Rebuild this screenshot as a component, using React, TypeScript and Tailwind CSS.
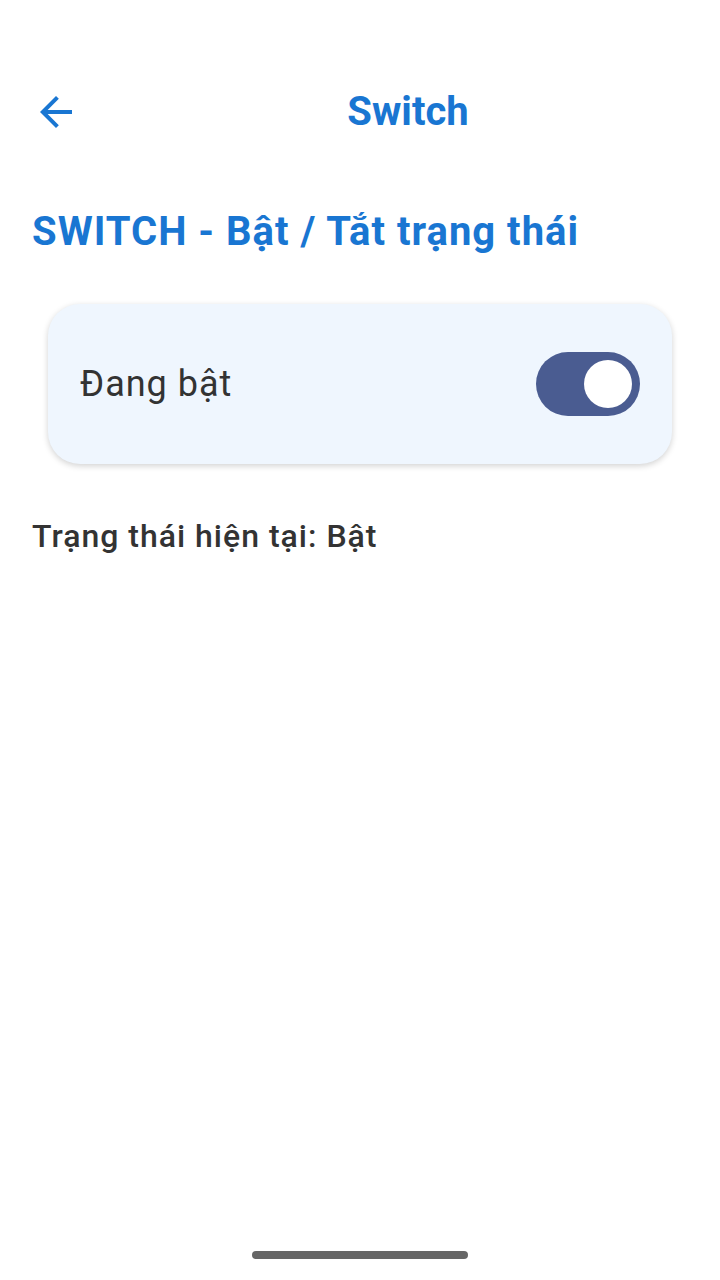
import React, { useState } from "react";

export default function App() {
  const [on, setOn] = useState(true);
  return (
    <div
      className="flex h-[1280px] w-[720px] flex-col bg-white"
      style={{ fontFamily: "Roboto, 'Noto Sans', sans-serif" }}
    >
      <div className="mt-[80px] flex h-16 items-center pl-8">
        <button className="flex h-12 w-12 items-center justify-center text-[#1976D2]">
          <svg width="48" height="48" viewBox="0 0 24 24" fill="currentColor">
            <path d="M20 11H7.83l5.59-5.59L12 4l-8 8 8 8 1.41-1.41L7.83 13H20v-2z" />
          </svg>
        </button>
        <div className="ml-4 flex-1 text-center text-[40px] font-bold leading-[48px] text-[#1976D2]">
          Switch
        </div>
      </div>
      <div className="mt-16 px-8 text-[40px] font-bold leading-[48px] tracking-[1px] text-[#1976D2]">
        SWITCH - Bật / Tắt trạng thái
      </div>
      <div className="mx-12 mt-12 flex h-[160px] items-center justify-between rounded-[32px] bg-[#EFF6FE] px-8 shadow-[0_2px_6px_rgba(0,0,0,0.18)]">
        <span className="text-[36px] leading-[44px] tracking-[1px] text-[#333333]">
          {on ? "Đang bật" : "Đang tắt"}
        </span>
        <button
          onClick={() => setOn(!on)}
          className={`flex h-16 w-[104px] items-center rounded-full px-2 ${
            on ? "justify-end bg-[#4A5C91]" : "justify-start bg-gray-300"
          }`}
        >
          <span className="block h-12 w-12 rounded-full bg-white" />
        </button>
      </div>
      <div className="mt-[52px] px-8 text-[32px] font-medium leading-[40px] tracking-[1px] text-[#333333]">
        Trạng thái hiện tại: {on ? "Bật" : "Tắt"}
      </div>
      <div className="mt-auto mb-[21px] flex justify-center">
        <div className="h-2 w-[216px] rounded-full bg-[#666666]" />
      </div>
    </div>
  );
}
